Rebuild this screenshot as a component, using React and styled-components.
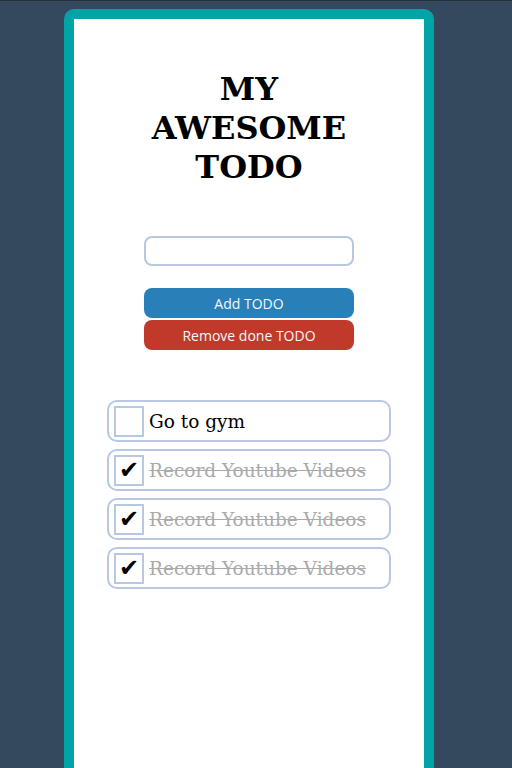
import { useState } from "react";
import styled, { createGlobalStyle } from "styled-components";

const GlobalStyle = createGlobalStyle`
  html, body {
    margin: 0;
    padding: 0;
    background-color: #34495e;
  }
  body {
    border-top: 1px solid #23303d;
    font-family: "DejaVu Serif", serif;
  }
`;

const Page = styled.div`
  padding: 8px 0 0 64px;
`;

const Card = styled.main`
  box-sizing: border-box;
  width: 370px;
  min-height: 780px;
  border: 10px solid #00a4a6;
  border-radius: 10px 10px 0 0;
  background-color: #ffffff;
  display: flex;
  flex-direction: column;
  align-items: center;
  padding-top: 51px;
`;

const Title = styled.h1`
  width: 220px;
  margin: 0 0 49px;
  font-family: "DejaVu Serif", serif;
  font-size: 32px;
  font-weight: bold;
  line-height: 39px;
  text-align: center;
  color: #000;
`;

const Form = styled.div`
  display: flex;
  flex-direction: column;
  align-items: center;
  width: 210px;
`;

const Input = styled.input`
  box-sizing: border-box;
  width: 210px;
  height: 30px;
  border: 2px solid #b7c8e2;
  border-radius: 8px;
  outline: none;
  margin-bottom: 22px;
  font-family: "Open Sans", sans-serif;
  font-size: 14px;
  padding: 0 8px;
`;

const Button = styled.button`
  width: 210px;
  height: 30px;
  border: none;
  border-radius: 8px;
  margin-bottom: 2px;
  background-color: ${({ $tone }) => ($tone === "danger" ? "#c0392b" : "#2980b9")};
  color: #f4f6f8;
  font-family: "Open Sans", sans-serif;
  font-size: 14px;
  cursor: pointer;
`;

const List = styled.ul`
  list-style: none;
  margin: 48px 0 0;
  padding: 0;
  display: flex;
  flex-direction: column;
  gap: 7px;
`;

const Item = styled.li`
  box-sizing: border-box;
  width: 284px;
  height: 42px;
  border: 2px solid #b7c8e2;
  border-radius: 10px;
  padding: 5px 5px;
  display: flex;
  align-items: center;
  gap: 5px;
  cursor: pointer;
`;

const Box = styled.span`
  box-sizing: border-box;
  width: 30px;
  height: 31px;
  border: 2px solid #b7c8e2;
  display: flex;
  align-items: center;
  justify-content: center;
  font-family: "DejaVu Sans", sans-serif;
  font-size: 24px;
  line-height: 1;
  color: #000;
  flex-shrink: 0;
`;

const Label = styled.span`
  font-family: "DejaVu Serif", serif;
  font-size: 18.5px;
  color: ${({ $done }) => ($done ? "#aaaaaa" : "#000000")};
  text-decoration: ${({ $done }) => ($done ? "line-through" : "none")};
  white-space: nowrap;
`;

const initialTodos = [
  { id: 1, text: "Go to gym", done: false },
  { id: 2, text: "Record Youtube Videos", done: true },
  { id: 3, text: "Record Youtube Videos", done: true },
  { id: 4, text: "Record Youtube Videos", done: true },
];

export default function App() {
  const [todos, setTodos] = useState(initialTodos);
  const [text, setText] = useState("");

  const add = () => {
    if (!text.trim()) return;
    setTodos([...todos, { id: Date.now(), text, done: false }]);
    setText("");
  };
  const removeDone = () => setTodos(todos.filter((t) => !t.done));
  const toggle = (id) =>
    setTodos(todos.map((t) => (t.id === id ? { ...t, done: !t.done } : t)));

  return (
    <Page>
      <GlobalStyle />
      <Card>
        <Title>MY AWESOME TODO</Title>
        <Form>
          <Input value={text} onChange={(e) => setText(e.target.value)} />
          <Button onClick={add}>Add TODO</Button>
          <Button $tone="danger" onClick={removeDone}>
            Remove done TODO
          </Button>
        </Form>
        <List>
          {todos.map((t) => (
            <Item key={t.id} onClick={() => toggle(t.id)}>
              <Box>{t.done ? "✔" : ""}</Box>
              <Label $done={t.done}>{t.text}</Label>
            </Item>
          ))}
        </List>
      </Card>
    </Page>
  );
}
